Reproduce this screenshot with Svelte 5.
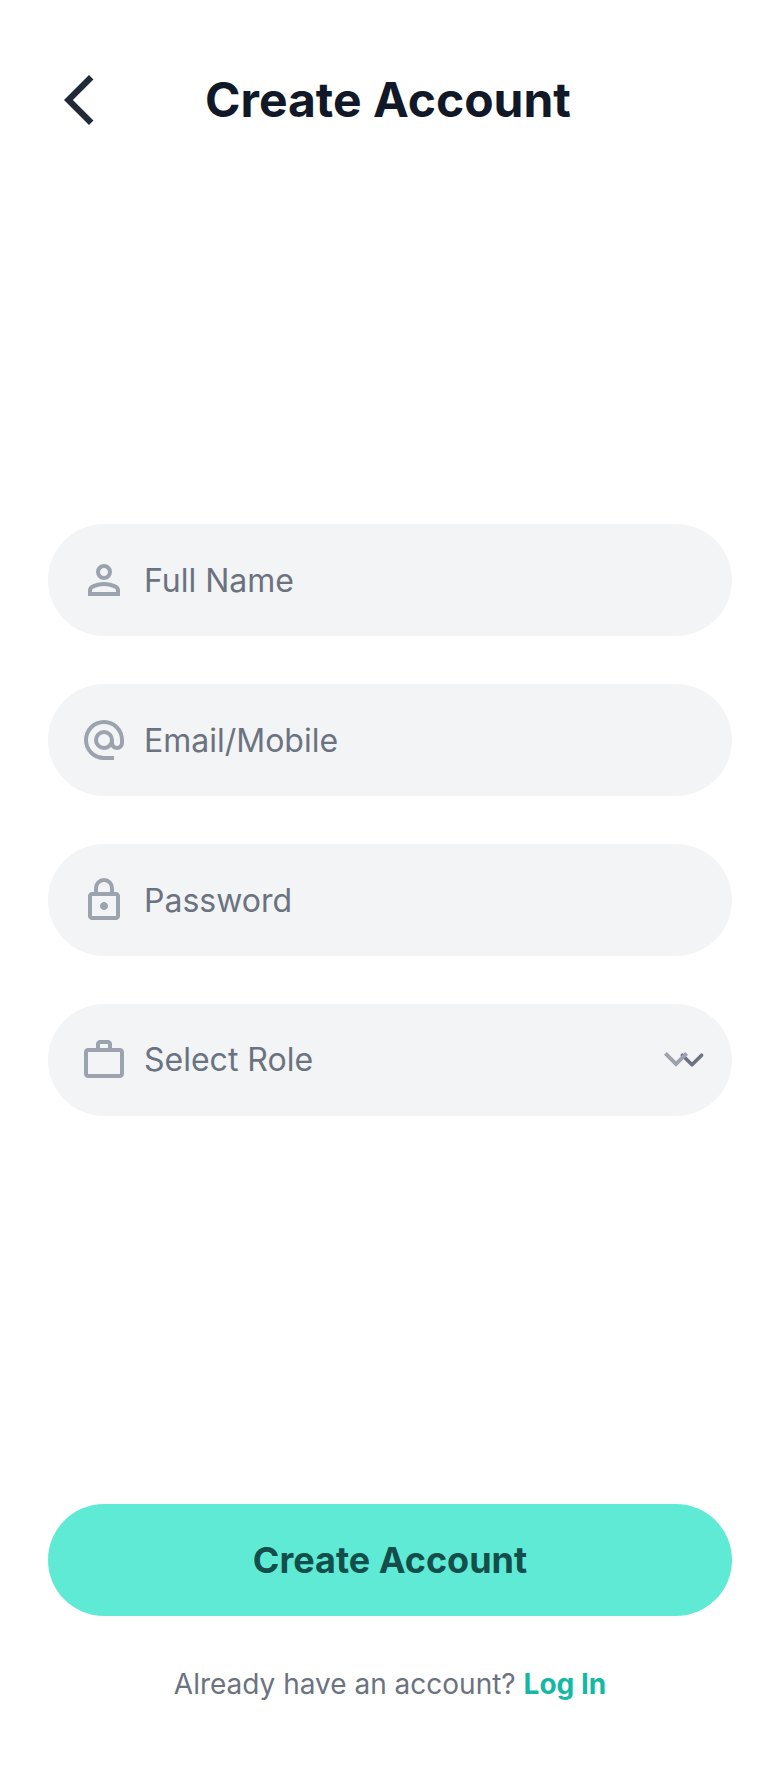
<script>
  const icons = {
    person:
      'M480-480q-66 0-113-47t-47-113q0-66 47-113t113-47q66 0 113 47t47 113q0 66-47 113t-113 47ZM160-160v-112q0-34 17.5-62.5T224-378q62-31 126-46.5T480-440q66 0 130 15.5T736-378q29 15 46.5 43.5T800-272v112H160Zm80-80h480v-32q0-11-5.5-20T700-306q-54-27-109-40.5T480-360q-56 0-111 13.5T260-306q-9 5-14.5 14t-5.5 20v32Zm240-320q33 0 56.5-23.5T560-640q0-33-23.5-56.5T480-720q-33 0-56.5 23.5T400-640q0 33 23.5 56.5T480-560Z',
    at: 'M480-80q-83 0-156-31.5T197-197q-54-54-85.5-127T80-480q0-83 31.5-156T197-763q54-54 127-85.5T480-880q83 0 156 31.5T763-763q54 54 85.5 127T880-480v58q0 59-40.5 100.5T740-280q-35 0-66-15t-52-43q-29 29-65.5 43.5T480-280q-83 0-141.5-58.5T280-480q0-83 58.5-141.5T480-680q83 0 141.5 58.5T680-480v58q0 26 17 44t43 18q26 0 43-18t17-44v-58q0-134-93-227t-227-93q-134 0-227 93t-93 227q0 134 93 227t227 93h200v80H480Zm0-280q50 0 85-35t35-85q0-50-35-85t-85-35q-50 0-85 35t-35 85q0 50 35 85t85 35Z',
    lock: 'M240-80q-33 0-56.5-23.5T160-160v-400q0-33 23.5-56.5T240-640h40v-80q0-83 58.5-141.5T480-920q83 0 141.5 58.5T680-720v80h40q33 0 56.5 23.5T800-560v400q0 33-23.5 56.5T720-80H240Zm0-80h480v-400H240v400Zm240-120q33 0 56.5-23.5T560-360q0-33-23.5-56.5T480-440q-33 0-56.5 23.5T400-360q0 33 23.5 56.5T480-280ZM360-640h240v-80q0-50-35-85t-85-35q-50 0-85 35t-35 85v80Z',
    work: 'M160-120q-33 0-56.5-23.5T80-200v-440q0-33 23.5-56.5T160-720h160v-80q0-33 23.5-56.5T400-880h160q33 0 56.5 23.5T640-800v80h160q33 0 56.5 23.5T880-640v440q0 33-23.5 56.5T800-120H160Zm0-80h640v-440H160v440Zm240-520h160v-80H400v80Z'
  };

  const fields = [
    { id: 'name', label: 'Full Name', type: 'text', icon: icons.person },
    { id: 'contact', label: 'Email/Mobile', type: 'text', icon: icons.at },
    { id: 'password', label: 'Password', type: 'password', icon: icons.lock }
  ];

  let role = $state('');
</script>

<div class="page">
  <header>
    <button class="back" type="button" aria-label="Back">
      <svg viewBox="0 -960 960 960" aria-hidden="true">
        <path d="M400-80 0-480l400-400 71 71-329 329 329 329-71 71Z" />
      </svg>
    </button>
    <h1>Create Account</h1>
  </header>

  <main>
    <form id="signup" onsubmit={(e) => e.preventDefault()}>
      {#each fields as field (field.id)}
        <div class="field">
          <svg class="icon" viewBox="0 -960 960 960" aria-hidden="true"><path d={field.icon} /></svg>
          <input id={field.id} type={field.type} placeholder={field.label} aria-label={field.label} />
        </div>
      {/each}
      <div class="field">
        <svg class="icon" viewBox="0 -960 960 960" aria-hidden="true"><path d={icons.work} /></svg>
        <select id="role" aria-label="Select Role" bind:value={role}>
          <option value="" disabled>Select Role</option>
        </select>
        <svg class="caret" viewBox="0 0 20 20" aria-hidden="true"><path d="m6 8 4 4 4-4" /></svg>
        <svg class="icon expand" viewBox="0 -960 960 960" aria-hidden="true">
          <path d="M480-345 240-585l56-56 184 184 184-184 56 56-240 240Z" />
        </svg>
      </div>
    </form>
  </main>

  <footer>
    <button class="submit" type="submit" form="signup">Create Account</button>
    <p>Already have an account? <a href="#login">Log In</a></p>
  </footer>
</div>

<style>
  :global(body) {
    margin: 0;
    background: #fff;
  }

  .page {
    display: flex;
    flex-direction: column;
    box-sizing: border-box;
    min-height: 100vh;
    font-family: Inter, sans-serif;
    color: #111827;
  }

  button,
  input,
  select {
    margin: 0;
    border: 0;
    font-family: inherit;
  }

  header {
    display: flex;
    align-items: center;
    padding: 64px 48px 48px;
  }

  .back {
    display: flex;
    padding: 6px 16px;
    background: none;
    color: #1f2937;
    cursor: pointer;
  }

  .back svg {
    width: 60px;
    height: 60px;
    fill: currentColor;
  }

  h1 {
    flex: 1;
    margin: 0;
    padding-right: 96px;
    font-size: 48px;
    line-height: 64px;
    font-weight: 700;
    text-align: center;
  }

  main {
    display: flex;
    flex: 1;
    flex-direction: column;
    justify-content: center;
    padding: 0 48px;
  }

  form {
    display: flex;
    flex-direction: column;
    gap: 48px;
  }

  .field {
    position: relative;
    display: grid;
    align-items: center;
  }

  .icon,
  .caret {
    position: absolute;
    left: 32px;
    width: 48px;
    height: 48px;
    fill: #9ca3af;
    pointer-events: none;
  }

  .expand {
    right: 32px;
    left: auto;
  }

  .caret {
    right: 16px;
    left: auto;
    fill: none;
    stroke: #6b7280;
    stroke-width: 1.5;
    stroke-linecap: round;
    stroke-linejoin: round;
  }

  input,
  select {
    box-sizing: border-box;
    width: 100%;
    height: 112px;
    padding: 0 96px;
    border-radius: 56px;
    background: #f3f4f6;
    color: #6b7280;
    font-size: 32px;
    line-height: 48px;
    appearance: none;
  }

  input::placeholder {
    color: #6b7280;
    opacity: 1;
  }

  footer {
    display: flex;
    flex-direction: column;
    gap: 48px;
    padding: 48px 48px 64px;
  }

  .submit {
    height: 112px;
    border-radius: 56px;
    background: #5eead4;
    color: #134e4a;
    font-size: 36px;
    line-height: 56px;
    font-weight: 700;
    cursor: pointer;
  }

  p {
    margin: 0;
    color: #6b7280;
    font-size: 28px;
    line-height: 40px;
    text-align: center;
  }

  a {
    color: #14b8a6;
    font-weight: 700;
    text-decoration: none;
  }
</style>
